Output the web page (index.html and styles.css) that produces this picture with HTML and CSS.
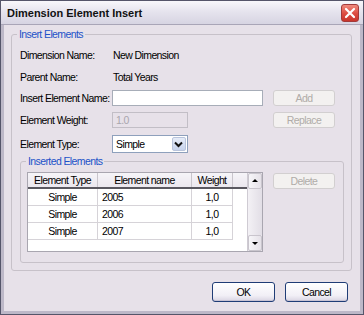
FILE: index.html
```html
<!DOCTYPE html>
<html lang="en">
<head>
    <meta charset="UTF-8">
    <title>Dimension Element Insert</title>
    <link rel="stylesheet" href="styles.css">
</head>
<body>
    <div class="window">
        <div class="titlebar">
            <span class="title">Dimension Element Insert</span>
            <span class="close">
                <svg width="18" height="18" viewBox="0 0 18 18">
                    <path d="M5 5 L13 13 M13 5 L5 13" stroke="#fff" stroke-width="2.2" stroke-linecap="round"/>
                </svg>
            </span>
        </div>
        <div class="client">
            <fieldset class="group outer">
                <legend>Insert Elements</legend>
                <div class="row h22">
                    <span class="label">Dimension Name:</span>
                    <span class="value">New Dimension</span>
                </div>
                <div class="row h22">
                    <span class="label">Parent Name:</span>
                    <span class="value">Total Years</span>
                </div>
                <div class="row h20">
                    <span class="label">Insert Element Name:</span>
                    <div class="textbox wide"></div>
                    <span class="btn disabled">Add</span>
                </div>
                <div class="row h24">
                    <span class="label">Element Weight:</span>
                    <div class="textbox short off">1.0</div>
                    <span class="btn disabled">Replace</span>
                </div>
                <div class="row h23">
                    <span class="label">Element Type:</span>
                    <div class="select">
                        <span class="select-text">Simple</span>
                        <span class="select-arrow">
                            <svg width="13" height="14" viewBox="0 0 13 14">
                                <path d="M3 5.5 L6.5 9 L10 5.5" fill="none" stroke="#111" stroke-width="2"/>
                            </svg>
                        </span>
                    </div>
                </div>
                <fieldset class="group inner">
                    <legend>Inserted Elements</legend>
                    <div class="list-row">
                        <div class="grid">
                            <div class="cells">
                                <table>
                                    <thead>
                                        <tr><th class="c1">Element Type</th><th class="c2">Element name</th><th class="c3">Weight</th><th class="fill"></th></tr>
                                    </thead>
                                    <tbody>
                                        <tr><td class="c1">Simple</td><td class="c2">2005</td><td class="c3">1,0</td><td class="fill"></td></tr>
                                        <tr><td class="c1">Simple</td><td class="c2">2006</td><td class="c3">1,0</td><td class="fill"></td></tr>
                                        <tr><td class="c1">Simple</td><td class="c2">2007</td><td class="c3">1,0</td><td class="fill"></td></tr>
                                    </tbody>
                                </table>
                            </div>
                            <div class="scrollbar">
                                <span class="sb-btn">
                                    <svg width="12" height="14" viewBox="0 0 12 14"><polygon points="3,8 6,5 9,8" fill="#000"/></svg>
                                </span>
                                <span class="sb-track"></span>
                                <span class="sb-btn">
                                    <svg width="12" height="14" viewBox="0 0 12 14"><polygon points="3,6 6,9 9,6" fill="#000"/></svg>
                                </span>
                            </div>
                        </div>
                        <span class="btn disabled delete">Delete</span>
                    </div>
                </fieldset>
            </fieldset>
            <div class="actions">
                <span class="btn push">OK</span>
                <span class="btn push">Cancel</span>
            </div>
        </div>
    </div>
</body>
</html>
```

FILE: styles.css
```css
body {
    margin: 0;
    font-family: "Liberation Sans", Arial, sans-serif;
    font-size: 10.5px;
    letter-spacing: -0.6px;
    color: #000;
    background: #fff;
}
.window {
    width: 364px;
    height: 315px;
    box-sizing: border-box;
    border: 1px solid #55556a;
    background: #bdb8c8;
    display: flex;
    flex-direction: column;
}
.titlebar {
    height: 24px;
    box-sizing: border-box;
    display: flex;
    align-items: center;
    padding: 0 4px 0 6px;
    background: linear-gradient(#f8f7fb, #e6e4ee 45%, #d7d4e2);
    border-bottom: 1px solid #a9a5b7;
}
.title {
    flex: 1;
    font-weight: bold;
    font-size: 11px;
    letter-spacing: 0;
    color: #111;
}
.close {
    width: 18px;
    height: 18px;
    box-sizing: border-box;
    border: 1px solid #a23a3a;
    border-radius: 3px;
    background: linear-gradient(#f08a7e, #dc4b40 55%, #c8352c);
    display: flex;
}
.close svg {
    margin: -1px;
}
.client {
    flex: 1;
    margin: 0 3px 3px;
    background: #e7e1e9;
    display: flex;
    flex-direction: column;
}
.group {
    border: 1px solid #c7c1c9;
    border-radius: 3px;
    margin: 0;
    min-width: 0;
}
.group legend {
    color: #2152c8;
    padding: 0 2px;
    line-height: 13px;
}
.outer {
    margin: 3px 8px 0 7px;
    padding: 3px 7px 7px 8px;
}
.outer > legend {
    margin-left: -3px;
}
.inner {
    padding: 4px 8px 10px 6px;
}
.inner > legend {
    margin-left: -1px;
}
.row {
    display: flex;
    align-items: center;
    padding-right: 9px;
}
.h20 { height: 20px; }
.h22 { height: 22px; }
.h23 { height: 23px; }
.h24 { height: 24px; }
.label {
    width: 92px;
    flex: none;
    white-space: nowrap;
}
.value {
    padding-left: 1px;
}
.textbox {
    height: 16px;
    box-sizing: border-box;
    border: 1px solid #a7adb8;
    background: #fff;
    padding-left: 3px;
    line-height: 14px;
}
.wide {
    width: 151px;
}
.short {
    width: 76px;
}
.off {
    background: #e7e1e9;
    border-color: #c2bec6;
    color: #a9a6ad;
}
.btn {
    width: 62px;
    height: 16px;
    box-sizing: border-box;
    margin-left: auto;
    border-radius: 3px;
    display: flex;
    align-items: center;
    justify-content: center;
}
.disabled {
    background: #f3f1f0;
    border: 1px solid #d2cfd0;
    color: #b0aca8;
}
.select {
    width: 76px;
    height: 18px;
    box-sizing: border-box;
    border: 1px solid #8ea0bc;
    background: #fff;
    display: flex;
    align-items: center;
}
.select-text {
    flex: 1;
    padding-left: 3px;
}
.select-arrow {
    width: 14px;
    height: 14px;
    margin-right: 1px;
    box-sizing: border-box;
    border: 1px solid #b9c4dc;
    border-radius: 2px;
    background: linear-gradient(#e6ecf8, #c6d2ec);
    display: flex;
}
.select-arrow svg {
    margin: -1px 0 0 -1px;
}
.list-row {
    display: flex;
    align-items: flex-start;
}
.grid {
    width: 236px;
    height: 80px;
    box-sizing: border-box;
    border: 1px solid #a9a6b0;
    background: #fff;
    display: flex;
}
.cells {
    flex: 1;
}
table {
    width: 100%;
    border-collapse: collapse;
}
th {
    height: 14px;
    padding: 0;
    font-weight: normal;
    background: linear-gradient(#f6f4f8, #ebe7ee);
    border-right: 1px solid #c9c5cc;
    border-bottom: 2px solid #5a5860;
}
td {
    height: 16px;
    padding: 0;
    border-right: 1px solid #d6d3d8;
    border-bottom: 1px solid #d6d3d8;
}
.c1 {
    width: 69px;
    text-align: center;
}
.c2 {
    width: 89px;
    padding-left: 4px;
}
th.c2 {
    text-align: center;
    padding-left: 0;
}
.c3 {
    width: 40px;
    text-align: center;
}
th.fill {
    border-right: none;
}
td.fill {
    border: none;
}
.scrollbar {
    width: 14px;
    border-left: 1px solid #cfcbd3;
    background: #ebe7ee;
    display: flex;
    flex-direction: column;
}
.sb-btn {
    height: 16px;
    box-sizing: border-box;
    border: 1px solid #c9c5cd;
    border-radius: 2px;
    background: linear-gradient(90deg, #f7f6f9, #e5e1e8);
    display: flex;
}
.sb-track {
    flex: 1;
    background: linear-gradient(90deg, #f3f1f5, #e2dee6);
}
.delete {
    margin-top: 1px;
}
.actions {
    display: flex;
    justify-content: flex-end;
    gap: 10px;
    margin-top: 11px;
    padding-right: 12px;
}
.push {
    width: 63px;
    height: 20px;
    margin-left: 0;
    border: 1px solid #1f3c76;
    background: linear-gradient(#ffffff, #f1eff6 70%, #d9d5e3);
    box-shadow: inset 0 -1px 0 #c8c3d4;
}
```
